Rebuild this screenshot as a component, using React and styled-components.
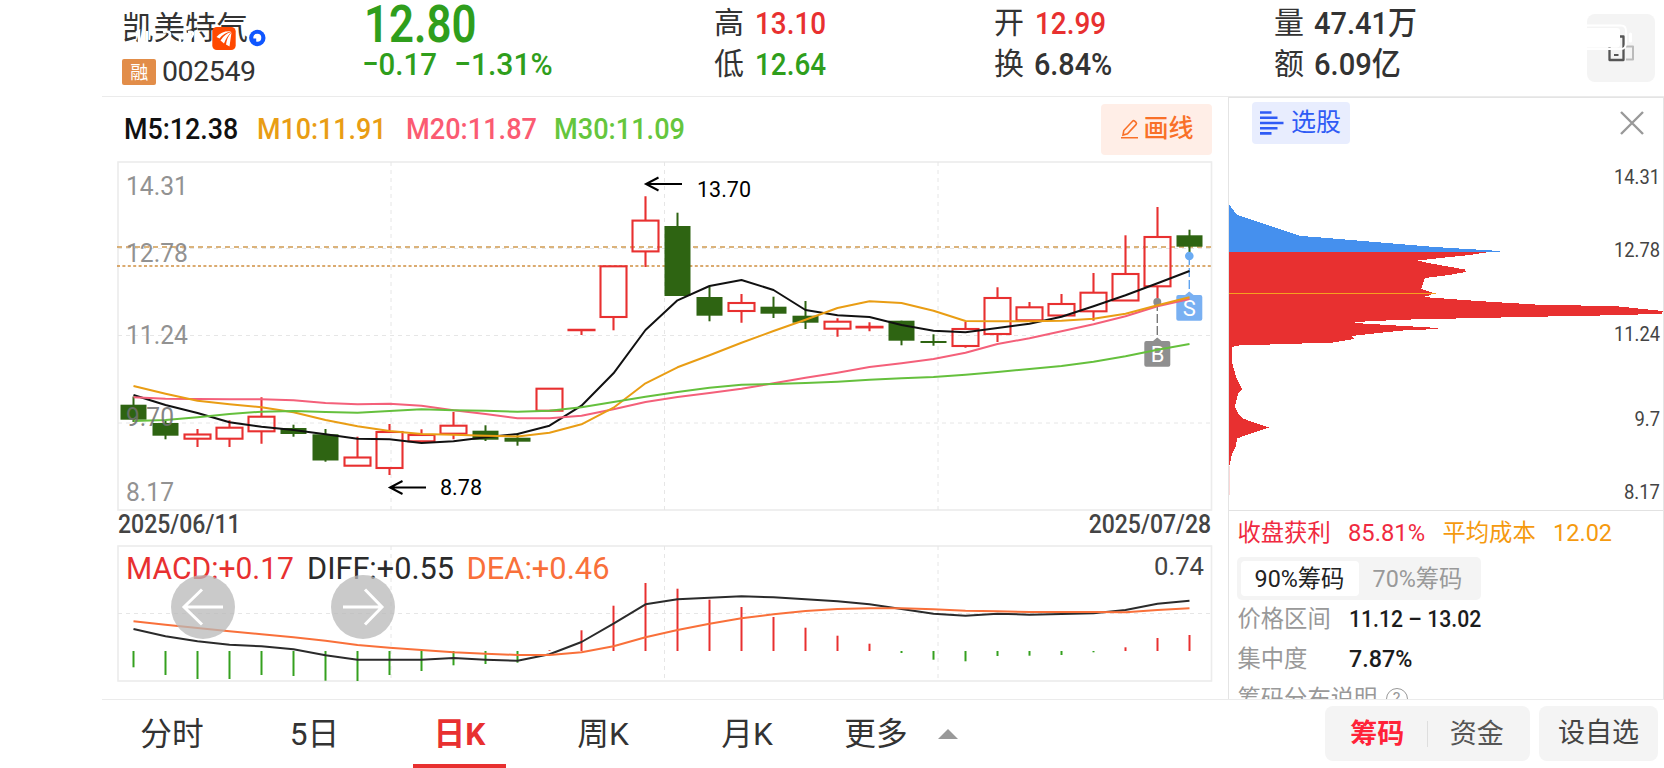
import React, { useState } from "react";
import styled, { createGlobalStyle } from "styled-components";

const RED = "#e83030";
const GREEN = "#2f9e1c";
const DARK = "#333333";

const FIRST_X = 133.5;
const STEP = 32;
const xAt = (i) => FIRST_X + STEP * i;

// [up/down, high, body top, body bottom, low]
const candles = [
	["d", 396.5, 404.7, 419.7, 422],
	["d", 421, 423, 435.7, 439.3],
	["u", 429, 434.5, 438.7, 447],
	["u", 420.3, 427.7, 438.7, 447],
	["u", 397.3, 416.7, 431.3, 443.7],
	["d", 424.7, 428, 434, 436.7],
	["d", 429, 434.3, 460.5, 461.7],
	["u", 436.7, 457.5, 465.7, 465.7],
	["u", 424, 432, 468, 475],
	["u", 429.3, 435, 441.3, 441.3],
	["u", 412, 425.7, 433.7, 439.3],
	["d", 425.3, 430.7, 439.7, 441],
	["d", 433, 437.7, 441.7, 445.7],
	["u", 388.7, 388.7, 410.7, 410.7],
	["u", 330, 329.8, 330.2, 335],
	["u", 266.3, 266.3, 317, 330.3],
	["u", 196.3, 220.6, 251.4, 267],
	["d", 212.7, 226, 296, 296],
	["d", 286.7, 297, 315.7, 321.3],
	["u", 294, 303, 311, 322.7],
	["d", 296.7, 306.7, 313.7, 318],
	["d", 301, 315.7, 322.7, 329],
	["u", 318.3, 321.7, 328.7, 336.7],
	["u", 322.3, 326.8, 327.4, 331.3],
	["d", 320.7, 320.7, 340.7, 345.3],
	["d", 334.3, 341, 343, 345.7],
	["u", 322, 329, 346, 347.7],
	["u", 287.3, 298, 334, 342],
	["u", 302, 307.3, 320.3, 320.3],
	["u", 294, 304, 315.5, 315.5],
	["u", 273, 292.7, 311.3, 320.7],
	["u", 235.3, 274, 300.5, 300.5],
	["u", 207, 237, 286.3, 301.7],
	["d", 229.7, 235.3, 246.7, 255.3],
];

const ma5 = [
	395, 405, 413, 422.3, 426.7, 430, 434.3, 438.7, 439.3, 443, 441.3, 437.3, 434, 425.7, 405.7, 373.3, 330, 300.3, 286,
	280, 290, 310, 315.3, 317, 325, 330.7, 332.3, 328, 323.7, 316.7, 306.3, 295.3, 283.3, 271,
];
const ma10 = [
	386, 393.7, 400.7, 404.3, 407.3, 412.3, 420, 426.3, 431, 434, 434.7, 435.7, 436.5, 432.7, 424.3, 407.7, 383.3, 367.3,
	355.3, 342.7, 331, 319.7, 308, 301.3, 303, 310.7, 321, 321.3, 321.3, 320.7, 318.7, 313.7, 305.3, 297.3,
];
const ma20 = [
	397.3, 398.7, 399, 399.3, 399.3, 400.3, 403, 404.3, 403.7, 405.7, 410.3, 414, 418.3, 418.3, 415.7, 409.3, 402, 397,
	393, 388.7, 383.3, 377.7, 372.7, 367, 363.3, 359, 352.7, 344, 338.3, 331.3, 324.3, 316.3, 306.3, 299,
];
const ma30 = [
	421, 420, 417.3, 414, 411.7, 411, 412, 412.7, 411, 409.3, 410.3, 410.7, 411.7, 410.7, 407.3, 402, 396.7, 392, 387.7,
	384.7, 384, 383, 381.7, 379.7, 378.3, 377, 374.7, 372, 369, 366, 361.7, 356.3, 349.7, 344,
];

const MACD_ZERO = 651;
const macd = [
	667.3, 675, 679, 679, 675, 676, 680.7, 681, 675, 671, 665.3, 664, 662.7, 650.3, 630.3, 605.7, 583, 588.7, 599.7, 607,
	617, 627.7, 635.7, 643.7, 653, 659.7, 661.3, 656, 655.7, 655, 652.3, 647.3, 638, 635,
];
const diff = [
	629, 636.3, 641.3, 644.7, 646.3, 649.3, 655.3, 659.7, 659.7, 659.7, 658, 659.7, 660.7, 654.3, 642, 623.7, 604.3,
	599.3, 597.7, 596.3, 597.3, 599.3, 601.3, 604.3, 609, 613.7, 615.7, 613.7, 614.7, 614, 613.3, 610, 603.7, 600.7,
];
const dea = [
	621.3, 624.7, 628, 631.3, 634.3, 637.3, 640.7, 645, 647.7, 650, 652.3, 653.7, 655, 655, 652.3, 646.3, 637.3, 630,
	623.7, 618.3, 614.3, 611, 609, 608.3, 608.3, 609.3, 610.7, 611.3, 612, 612, 612, 612.3, 610, 608.3,
];

const gridX = [391, 664.5, 938];

const chipAbove = "1229,204.5 1237,215 1301,236 1315,237 1435,247 1500,251 1500,252 1229,252";
const chipBelow =
	"1229,251.5 1492,251.5 1470,255 1445,257.5 1418,260.5 1428,263 1465,269.5 1466,272 1449,275 1425,278 1421,289 1432,292.5 1431,295 1423,297 1478,301 1535,304.5 1617,306.3 1648,309.5 1663,311 1662,313.5 1626,315 1523,317 1403,319.7 1354,322 1355,323 1413,326.5 1438,328 1438,329 1403,330.5 1378,333 1352,336 1354,339 1333,342.5 1302,343.5 1239,345.5 1232,347 1232.5,364 1236,377 1242,389.5 1238,394 1235.5,404 1235,407 1238,413 1242,418 1252,422 1269,427.5 1261,430 1252,433 1237,438.5 1236,446 1232,454 1229.8,464 1229,466";

const toPoints = (ys) => ys.map((y, i) => `${xAt(i)},${y}`).join(" ");

function Candle({ x, data }) {
	const [dir, high, top, bottom, low] = data;
	if (dir === "d") {
		return (
			<g fill="#2e6412">
				<rect x={x - 1} y={high} width="2" height={low - high} />
				<rect x={x - 13} y={top} width="26" height={bottom - top} />
			</g>
		);
	}
	return (
		<g stroke={RED} strokeWidth="2.1" fill="none">
			<path d={`M${x} ${high}V${top}M${x} ${bottom}V${low}`} />
			<rect x={x - 13} y={top} width="26" height={bottom - top} />
		</g>
	);
}

function ChartText({ x, y, w, size, fill, children }) {
	return (
		<text x={x} y={y} textLength={w} lengthAdjust="spacingAndGlyphs" fontSize={size} fill={fill}>
			{children}
		</text>
	);
}

function KLineChart() {
	return (
		<ChartSvg width="1096" height="350" viewBox="117 161 1096 350">
			<rect x="118" y="162" width="1093.5" height="348" fill="none" stroke="#ececec" strokeWidth="1.6" />
			<g stroke="#e6e6e6" strokeDasharray="4 4">
				{gridX.map((x) => (
					<path key={x} d={`M${x} 162V510`} />
				))}
				<path d="M118 248.5H1211M118 335.5H1211M118 423H1211" />
			</g>
			<path d="M117 247H1211" stroke="#cf9a50" strokeWidth="1.4" strokeDasharray="5 4" />
			<path d="M117 266H1211" stroke="#cf8f40" strokeWidth="1.6" strokeDasharray="3 2.4" />
			{candles.map((c, i) => (
				<Candle key={i} x={xAt(i)} data={c} />
			))}

			{/* 买卖点 */}
			<path d="M1157.3 302V341" stroke="#777" strokeWidth="1.4" strokeDasharray="9 3" />
			<circle cx="1157.3" cy="302" r="4" fill="#8c8c8c" />
			<path d="M1189.3 256V295" stroke="#5fa3ef" strokeWidth="1.4" strokeDasharray="9 3" />
			<circle cx="1189.3" cy="256" r="4.3" fill="#6aabf3" />
			<path
				d="M1146.3 341H1153L1157.3 337.5L1161.6 341H1168.3Q1170.3 341 1170.3 343V364.7Q1170.3 366.7 1168.3 366.7H1146.3Q1144.3 366.7 1144.3 364.7V343Q1144.3 341 1146.3 341Z"
				fill="#8f8f8f"
			/>
			<path
				d="M1178.3 295H1185L1189.3 291.5L1193.6 295H1200.3Q1202.3 295 1202.3 297V318.7Q1202.3 320.7 1200.3 320.7H1178.3Q1176.3 320.7 1176.3 318.7V297Q1176.3 295 1178.3 295Z"
				fill="#79b0f2"
			/>
			<text x="1157.7" y="362" fontSize="22" fill="#fff" textAnchor="middle">B</text>
			<text x="1189.3" y="316" fontSize="22" fill="#fff" textAnchor="middle">S</text>

			<g fill="none" strokeWidth="2" strokeLinejoin="round">
				<polyline points={toPoints(ma5)} stroke="#111" />
				<polyline points={toPoints(ma20)} stroke="#f4607a" />
				<polyline points={toPoints(ma10)} stroke="#e99d14" />
				<polyline points={toPoints(ma30)} stroke="#65c03d" />
			</g>

			<g opacity="0.85">
				<ChartText x={126} y={194.5} w={62} size={26} fill="#808080">14.31</ChartText>
				<ChartText x={126} y={262} w={62} size={26} fill="#808080">12.78</ChartText>
				<ChartText x={126} y={344} w={62} size={26} fill="#808080">11.24</ChartText>
				<ChartText x={126} y={426} w={48} size={26} fill="#707070">9.70</ChartText>
				<ChartText x={126} y={500.5} w={48} size={26} fill="#808080">8.17</ChartText>
			</g>

			<g fill="none" stroke="#000" strokeWidth="2">
				<path d="M682 184H646M658.5 177.500L646 184L658.500 190.500" />
				<path d="M426 487.500H390M402.500 481L390 487.500L402.500 494" />
			</g>
			<ChartText x={697} y={196.5} w={54} size={22.5} fill="#000">13.70</ChartText>
			<ChartText x={440} y={494.5} w={42} size={22.5} fill="#000">8.78</ChartText>
		</ChartSvg>
	);
}

function MacdChart() {
	return (
		<ChartSvg width="1096" height="138" viewBox="117 545 1096 138">
			<rect x="118" y="546" width="1093.5" height="135" fill="none" stroke="#ececec" strokeWidth="1.6" />
			<g stroke="#e6e6e6" strokeDasharray="4 4">
				{gridX.map((x) => (
					<path key={x} d={`M${x} 546V681`} />
				))}
				<path d="M118 613.5H1211" />
			</g>
			{macd.map((y, i) => (
				<path key={i} d={`M${xAt(i)} ${MACD_ZERO}V${y}`} stroke={y > MACD_ZERO ? "#35a01f" : RED} strokeWidth="2" />
			))}
			<g fill="none" strokeWidth="2" strokeLinejoin="round">
				<polyline points={toPoints(diff)} stroke="#2b2b2b" />
				<polyline points={toPoints(dea)} stroke="#f9703a" />
			</g>
			<ChartText x={126} y={579} w={168} size={30.5} fill={RED}>MACD:+0.17</ChartText>
			<ChartText x={307} y={579} w={147} size={30.5} fill="#2b2b2b">DIFF:+0.55</ChartText>
			<ChartText x={466.5} y={579} w={143} size={30.5} fill="#f9703a">DEA:+0.46</ChartText>
			<ChartText x={1154} y={575} w={50} size={26.5} fill="#444">0.74</ChartText>
		</ChartSvg>
	);
}

function ChipChart() {
	return (
		<ChartSvg width="434" height="360" viewBox="1229 150 434 360">
			<g shapeRendering="crispEdges">
				<polygon points={chipBelow} fill="#e83030" />
				<polygon points={chipAbove} fill="#4590ee" />
				<path d="M1229 293.5H1436" stroke="#f5a020" strokeWidth="1.5" />
			</g>
			<path d="M1229.2 466V495" stroke="#f5a0a0" strokeWidth="0.6" />
			<ChartText x={1614} y={183.5} w={46} size={20.5} fill="#444">14.31</ChartText>
			<ChartText x={1614} y={256.5} w={46} size={20.5} fill="#444">12.78</ChartText>
			<ChartText x={1614} y={341} w={46} size={20.5} fill="#444">11.24</ChartText>
			<ChartText x={1634.5} y={426} w={25.5} size={20.5} fill="#444">9.7</ChartText>
			<ChartText x={1624} y={499} w={36} size={20.5} fill="#444">8.17</ChartText>
		</ChartSvg>
	);
}

function ArrowIcon({ flip }) {
	return (
		<svg width="64" height="64" viewBox="0 0 64 64" fill="none" stroke="#fff" strokeWidth="3">
			<path d={flip ? "M12 32H51M34 14.5L51 32L34 49.5" : "M52 32H13M31 14.5L13 32L31 49.5"} />
		</svg>
	);
}

function App() {
	const [period, setPeriod] = useState("日K");
	const [range, setRange] = useState("90%筹码");
	const tabs = [
		{ name: "分时", w: 140 },
		{ name: "5日", w: 145 },
		{ name: "日K", w: 145 },
		{ name: "周K", w: 142 },
		{ name: "月K", w: 146 },
		{ name: "更多", w: 112 },
	];
	return (
		<Page>
			<GlobalStyle />
			<Header>
				<Stock>
					<StockName>凯美特气</StockName>
					<StockCode>
						<Badge>融</Badge>
						002549
					</StockCode>
					{/* 状态栏 */}
					<StatusIcons width="150" height="30" viewBox="122 24 150 30">
						<g stroke="#fff" strokeWidth="2.6" fill="none">
							<path d="M136 32.5L139 31V43M147 31V43M154 33V35.5M154 40V42.5M163 32Q171 30 170 36L162 42H172M180 36V43M188 32Q195 31 192 36L187 43" />
						</g>
						<rect x="212.3" y="27" width="23.4" height="23" rx="4.5" fill="#ff4800" />
						<g fill="#fff">
							<path d="M216.5 37Q222 30.5 231.500 31.500Q224 32.500 219.500 38.500Z" />
							<path d="M220.500 40.500Q224.500 33.500 231.500 32Q226.500 36.500 224 43.500Z" />
							<path d="M226 44.500Q227 37 231.500 32.500Q230.500 39 229.500 46.500Z" />
						</g>
						<circle cx="257.3" cy="38" r="8.2" fill="#0f56ff" />
						<circle cx="257.3" cy="37.8" r="4" fill="#fff" />
						<rect x="253" y="38.5" width="3.2" height="4" fill="#0f56ff" />
					</StatusIcons>
				</Stock>
				<div>
					<Price>
						<Num $scale={0.85}>12.80</Num>
					</Price>
					<Change>
						<Num $scale={0.92}>−0.17</Num>
						<Num $scale={0.94}>−1.31%</Num>
					</Change>
				</div>
				<Quotes>
					<Quote>高 <Num $scale={0.87} $color={RED}>13.10</Num></Quote>
					<Quote>低 <Num $scale={0.87} $color={GREEN}>12.64</Num></Quote>
				</Quotes>
				<Quotes>
					<Quote>开 <Num $scale={0.87} $color={RED}>12.99</Num></Quote>
					<Quote $gap={40}>换 <Num $scale={0.9}>6.84%</Num></Quote>
				</Quotes>
				<Quotes>
					<Quote $gap={40}>量 <Num $scale={0.905}>47.41万</Num></Quote>
					<Quote $gap={40}>额 <Num $scale={0.91}>6.09亿</Num></Quote>
				</Quotes>
				<RotateButton>
					<svg width="68" height="68" viewBox="1587 14 68 68" fill="none">
						<path d="M1620 36.5H1623.5V60H1609.5V46" stroke="#555" strokeWidth="2.3" strokeLinejoin="round" />
						<path d="M1614 55H1618.5" stroke="#555" strokeWidth="2" />
						<path d="M1626 46.5H1633V59.5H1626" stroke="#bbb" strokeWidth="2" strokeLinejoin="round" />
						<path d="M1587 28H1617Q1620 28 1620 31V44Q1620 47.5 1617 47.5H1587Z" fill="#fff" />
						<path d="M1587 25.5H1621Q1626 25.5 1626 31V43Q1626 49 1621 49H1587" stroke="#fff" strokeWidth="1.8" />
						<path d="M1630.5 34V41" stroke="#fff" strokeWidth="3" strokeLinecap="round" />
					</svg>
				</RotateButton>
			</Header>

			<Body>
				<Main>
					<MaRow>
						<MaItem $w={133} $color="#111"><Num $scale={0.91}>M5:12.38</Num></MaItem>
						<MaItem $w={148.5} $color="#e99d14"><Num $scale={0.91}>M10:11.91</Num></MaItem>
						<MaItem $w={148.5} $color="#fb5b72"><Num $scale={0.92}>M20:11.87</Num></MaItem>
						<MaItem $w={150} $color="#65c63d"><Num $scale={0.92}>M30:11.09</Num></MaItem>
						<DrawButton>
							<svg width="18" height="20" viewBox="0 0 18 20" fill="none" stroke="#f97028" strokeWidth="1.6">
								<path d="M2 16L2.8 11.5L11.5 2.2Q12.5 1.2 13.7 2.2L15 3.4Q16 4.5 15 5.6L6.5 14.7ZM0 18.8H17" />
							</svg>
							画线
						</DrawButton>
					</MaRow>
					<KLineChart />
					<Dates>
						<Num $scale={0.92}>2025/06/11</Num>
						<Num $scale={0.92} $right>2025/07/28</Num>
					</Dates>
					<MacdWrap>
						<MacdChart />
						<Pager>
							<PagerButton><ArrowIcon /></PagerButton>
							<PagerButton><ArrowIcon flip /></PagerButton>
						</Pager>
					</MacdWrap>
				</Main>

				<Side>
					<SideTop>
						<PickButton>
							<svg width="24" height="24" viewBox="0 0 24 24" stroke="#2f5bf5" strokeWidth="2.6">
								<path d="M0 1.5H11.5M0 6.7H17.5M0 12H23.5M0 17.2H17.5M0 22.4H11.5" />
							</svg>
							选股
						</PickButton>
						<svg width="24" height="24" viewBox="0 0 24 24" stroke="#999" strokeWidth="2.4">
							<path d="M1 1L23 23M23 1L1 23" />
						</svg>
					</SideTop>
					<ChipChart />
					<Info>
						<InfoRow $h={44}>
							<Label $w={110.5} $color="#f02a40">收盘获利</Label>
							<Value $w={94.5} $color="#f02a40"><Num $scale={0.97}>85.81%</Num></Value>
							<Label $w={110.5} $color="#f59a0f">平均成本</Label>
							<Value $color="#f59a0f"><Num $scale={0.96}>12.02</Num></Value>
						</InfoRow>
						<Segment>
							{["90%筹码", "70%筹码"].map((name) => (
								<SegmentItem key={name} $active={range === name} onClick={() => setRange(name)}>
									{name}
								</SegmentItem>
							))}
						</Segment>
						<InfoRow $h={38}>
							<Label $w={111}>价格区间</Label>
							<Value $bold><Num $scale={0.865}>11.12 – 13.02</Num></Value>
						</InfoRow>
						<InfoRow $h={41}>
							<Label $w={111}>集中度</Label>
							<Value $bold><Num $scale={0.95}>7.87%</Num></Value>
						</InfoRow>
						<InfoRow $h={40}>
							<Label $w={148}>筹码分布说明</Label>
							<Help>?</Help>
						</InfoRow>
					</Info>
				</Side>
			</Body>

			<Footer>
				<Tabs>
					{tabs.map((t) => (
						<Tab key={t.name} $w={t.w} $active={period === t.name} onClick={() => setPeriod(t.name)}>
							<span>{t.name}</span>
						</Tab>
					))}
					<MoreArrow width="20" height="10" viewBox="0 0 20 10" fill="#999">
						<path d="M10 0L20 10H0Z" />
					</MoreArrow>
				</Tabs>
				<Actions>
					<ActionGroup>
						<Action $active>筹码</Action>
						<Action>资金</Action>
					</ActionGroup>
					<Favorite>设自选</Favorite>
				</Actions>
			</Footer>
		</Page>
	);
}

export default App;

const GlobalStyle = createGlobalStyle`
	* {
		box-sizing: border-box;
	}
	body {
		margin: 0;
		background: #fff;
	}
`;

const Page = styled.div`
	width: 1664px;
	height: 768px;
	padding-left: 102px;
	display: flex;
	flex-direction: column;
	overflow: hidden;
	background: #fff;
	color: ${DARK};
	font-family: Roboto, "Noto Sans CJK SC", sans-serif;
`;

const Header = styled.header`
	height: 97px;
	flex: none;
	padding-left: 20px;
	display: grid;
	grid-template-columns: 240px 352px 280px 280px 313px 68px;
	border-bottom: 1px solid #ebebeb;
`;

/* DIN 风格的窄数字 */
const Num = styled.span`
	display: inline-block;
	white-space: nowrap;
	color: ${(p) => p.$color || "inherit"};
	transform: scaleX(${(p) => p.$scale || 1});
	transform-origin: ${(p) => (p.$right ? "100% 50%" : "0 50%")};
`;

const Stock = styled.div`
	position: relative;
	padding-top: 10px;
`;

const StockName = styled.div`
	font-size: 31.5px;
	line-height: 38px;
`;

const StockCode = styled.div`
	display: flex;
	align-items: center;
	gap: 6px;
	margin-top: 7px;
	font-size: 28.5px;
	line-height: 34px;
	letter-spacing: -0.4px;
`;

const Badge = styled.span`
	width: 34px;
	height: 26px;
	border-radius: 2px;
	background: #e28d49;
	color: #fff;
	font-size: 18px;
	line-height: 27px;
	text-align: center;
`;

const StatusIcons = styled.svg`
	position: absolute;
	left: 0;
	top: 24px;
`;

const Price = styled.div`
	height: 46px;
	padding-left: 2px;
	color: ${GREEN};
	font-size: 51.5px;
	font-weight: 600;
	line-height: 49px;
`;

const Change = styled.div`
	display: grid;
	grid-template-columns: 92px 110px;
	color: ${GREEN};
	font-size: 32px;
	font-weight: 500;
	line-height: 36px;
`;

const Quotes = styled.div`
	padding-top: 3px;
`;

const Quote = styled.div`
	display: grid;
	grid-template-columns: ${(p) => p.$gap || 41}px 1fr;
	height: 41px;
	font-size: 30px;
	line-height: 40px;

	${Num} {
		justify-self: start;
		font-size: 32px;
		font-weight: 500;
	}
`;

const RotateButton = styled.button`
	width: 68px;
	height: 68px;
	margin-top: 14px;
	padding: 0;
	border: 0;
	border-radius: 8px;
	background: #f4f4f4;
`;

const Body = styled.div`
	flex: 1;
	min-height: 0;
	display: flex;
`;

const Main = styled.main`
	width: 1126px;
	padding-left: 15px;
	display: flex;
	flex-direction: column;
`;

const MaRow = styled.div`
	height: 64px;
	padding-left: 7px;
	display: flex;
	align-items: center;
`;

const MaItem = styled.span`
	width: ${(p) => p.$w}px;
	color: ${(p) => p.$color};
	font-size: 29.5px;
	font-weight: 500;
	line-height: 36px;
`;

const DrawButton = styled.button`
	width: 111px;
	height: 51px;
	margin-left: auto;
	margin-right: 16px;
	padding: 0 0 0 2px;
	display: flex;
	align-items: center;
	justify-content: center;
	gap: 4px;
	border: 0;
	border-radius: 4px;
	background: #ffeee7;
	color: #f97028;
	font: 500 25px/30px Roboto, "Noto Sans CJK SC", sans-serif;
`;

const ChartSvg = styled.svg`
	display: block;
	flex: none;
	font-family: Roboto, "Noto Sans CJK SC", sans-serif;
`;

const Dates = styled.div`
	height: 34px;
	width: 1094px;
	padding-left: 1px;
	display: flex;
	justify-content: space-between;
	color: #444;
	font-size: 25px;
	font-weight: 500;
	line-height: 28px;
`;

const MacdWrap = styled.div`
	position: relative;
`;

const Pager = styled.div`
	position: absolute;
	left: 54px;
	top: 29.5px;
	display: flex;
	gap: 96px;
`;

const PagerButton = styled.button`
	width: 64px;
	height: 64px;
	padding: 0;
	border: 0;
	border-radius: 50%;
	background: rgba(184, 184, 184, 0.75);
`;

const Side = styled.aside`
	width: 436px;
	display: flex;
	flex-direction: column;
	overflow: hidden;
	border-left: 1px solid #e4e4e4;
	border-right: 1px solid #e4e4e4;
	border-top: 1px solid #e4e4e4;
`;

const SideTop = styled.div`
	height: 52px;
	flex: none;
	padding: 4px 19px 6px 23px;
	display: flex;
	align-items: center;
	justify-content: space-between;
`;

const PickButton = styled.button`
	width: 98px;
	height: 42px;
	padding: 0 9px 0 8px;
	display: flex;
	align-items: center;
	justify-content: space-between;
	border: 0;
	border-radius: 4px;
	background: #e8edfe;
	color: #2f5bf5;
	font: 400 25px/30px Roboto, "Noto Sans CJK SC", sans-serif;
`;

const Info = styled.div`
	padding-left: 8.5px;
	border-top: 1px solid #e2e2e2;
`;

const InfoRow = styled.div`
	height: ${(p) => p.$h}px;
	display: flex;
	align-items: center;
	line-height: 30px;
`;

const Label = styled.span`
	width: ${(p) => p.$w}px;
	color: ${(p) => p.$color || "#999"};
	font-size: 23.3px;
`;

const Value = styled.span`
	width: ${(p) => (p.$w ? p.$w + "px" : "auto")};
	color: ${(p) => p.$color || "#1c1c1c"};
	font-size: 24.5px;
	font-weight: ${(p) => (p.$bold ? 500 : 400)};
`;

const Segment = styled.div`
	width: 244px;
	height: 43px;
	margin: 2px 0 0 -1px;
	padding: 4px;
	display: flex;
	border-radius: 5px;
	background: #f4f4f4;
`;

const SegmentItem = styled.button`
	flex: 1;
	padding: 0;
	border: 0;
	border-radius: 4px;
	background: ${(p) => (p.$active ? "#fff" : "transparent")};
	color: ${(p) => (p.$active ? "#222" : "#999")};
	font: 400 23.3px/30px Roboto, "Noto Sans CJK SC", sans-serif;
`;

const Help = styled.span`
	width: 22px;
	height: 22px;
	border: 1.5px solid #999;
	border-radius: 50%;
	color: #999;
	font-size: 16px;
	line-height: 19px;
	text-align: center;
`;

const Footer = styled.footer`
	height: 69px;
	flex: none;
	display: flex;
	justify-content: space-between;
	border-top: 1px solid #ebebeb;
`;

const Tabs = styled.nav`
	display: flex;
	align-items: center;
`;

const Tab = styled.button`
	width: ${(p) => p.$w}px;
	height: 68px;
	padding: 0;
	display: flex;
	justify-content: center;
	border: 0;
	background: transparent;
	color: ${(p) => (p.$active ? RED : DARK)};
	font: ${(p) => (p.$active ? 700 : 400)} 31.7px/69px Roboto, "Noto Sans CJK SC", sans-serif;

	span {
		min-width: 93px;
		height: 68px;
		border-bottom: 4px solid ${(p) => (p.$active ? RED : "transparent")};
	}
`;

const MoreArrow = styled.svg`
	margin-left: 6px;
`;

const Actions = styled.div`
	padding: 6px 6px 0 0;
	display: flex;
	gap: 9px;
`;

const ActionGroup = styled.div`
	width: 205px;
	height: 55px;
	display: flex;
	align-items: center;
	border-radius: 8px;
	background: #f4f4f4;
`;

const Action = styled.button`
	flex: 1;
	height: 26px;
	padding: ${(p) => (p.$active ? "0 0 0 3px" : "0 4px 0 0")};
	border: 0;
	border-right: ${(p) => (p.$active ? "1px solid #dedede" : "0")};
	background: transparent;
	color: ${(p) => (p.$active ? "#ff2238" : "#555")};
	font: ${(p) => (p.$active ? 700 : 400)} 27px/26px Roboto, "Noto Sans CJK SC", sans-serif;
`;

const Favorite = styled.button`
	width: 119px;
	height: 55px;
	padding: 0;
	border: 0;
	border-radius: 8px;
	background: #f4f4f4;
	color: #444;
	font: 400 27px/55px Roboto, "Noto Sans CJK SC", sans-serif;
`;
